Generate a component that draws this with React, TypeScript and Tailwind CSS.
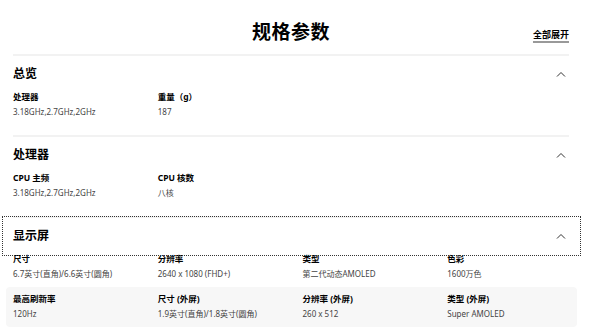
type Spec = { label: string; value: string };

const sections: { title: string; rows: Spec[][]; focus?: boolean }[] = [
  {
    title: "总览",
    rows: [
      [
        { label: "处理器", value: "3.18GHz,2.7GHz,2GHz" },
        { label: "重量（g）", value: "187" },
      ],
    ],
  },
  {
    title: "处理器",
    rows: [
      [
        { label: "CPU 主频", value: "3.18GHz,2.7GHz,2GHz" },
        { label: "CPU 核数", value: "八核" },
      ],
    ],
  },
  {
    title: "显示屏",
    focus: true,
    rows: [
      [
        { label: "尺寸", value: "6.7英寸(直角)/6.6英寸(圆角)" },
        { label: "分辨率", value: "2640 x 1080 (FHD+)" },
        { label: "类型", value: "第二代动态AMOLED" },
        { label: "色彩", value: "1600万色" },
      ],
      [
        { label: "最高刷新率", value: "120Hz" },
        { label: "尺寸 (外屏)", value: "1.9英寸(直角)/1.8英寸(圆角)" },
        { label: "分辨率 (外屏)", value: "260 x 512" },
        { label: "类型 (外屏)", value: "Super AMOLED" },
      ],
    ],
  },
];

function ChevronUp() {
  return (
    <svg width="10" height="6" viewBox="0 0 10 6" fill="none" className="mr-[3px]">
      <path d="M1 5.5 L5 1.5 L9 5.5" stroke="#333" strokeWidth="1" />
    </svg>
  );
}

export default function App() {
  return (
    <div
      className="w-[600px] h-[328px] overflow-hidden bg-white text-black"
      style={{ fontFamily: '"Noto Sans", "Noto Sans CJK SC", sans-serif' }}
    >
      <div className="pl-[13px] pr-[31px]">
        {/* heading */}
        <div className="grid grid-cols-[1fr_auto_1fr] items-end pt-[18px] pb-[8px]">
          <div />
          <h1 className="text-[19px] leading-[28px] font-bold tracking-[0.5px]">规格参数</h1>
          <div className="flex justify-end pb-[5px]">
            <button className="text-[9px] leading-[12px] font-bold underline decoration-[#999] decoration-2 underline-offset-[3px]">
              全部展开
            </button>
          </div>
        </div>

        {sections.map((s) => (
          <section key={s.title} className="border-t-2 border-[#f2f2f2] pb-[10px]">
            <div className="relative flex items-center justify-between pt-[10px] pb-[3px]">
              <h2 className="text-[12px] leading-[16px] font-bold">{s.title}</h2>
              <ChevronUp />
              {s.focus && (
                <span className="absolute top-[-2px] bottom-[-9px] left-[-11px] right-[-12px] border border-dotted border-[#333]" />
              )}
            </div>
            {s.rows.map((row, i) => (
              <div
                key={i}
                className={`grid grid-cols-4 gap-x-[23px] h-[40px] pt-[6px] ml-[-7px] mr-[-8px] pl-[7px] pr-[8px] rounded-[4px] ${
                  i % 2 === 1 ? "bg-[#f7f7f7]" : ""
                }`}
              >
                {row.map((c) => (
                  <div key={c.label} className="flex flex-col gap-[3px]">
                    <div className="text-[8.5px] leading-[12px] font-bold whitespace-nowrap">{c.label}</div>
                    <div className="text-[8px] leading-[12px] text-[#444] whitespace-nowrap">{c.value}</div>
                  </div>
                ))}
              </div>
            ))}
          </section>
        ))}
      </div>
    </div>
  );
}
